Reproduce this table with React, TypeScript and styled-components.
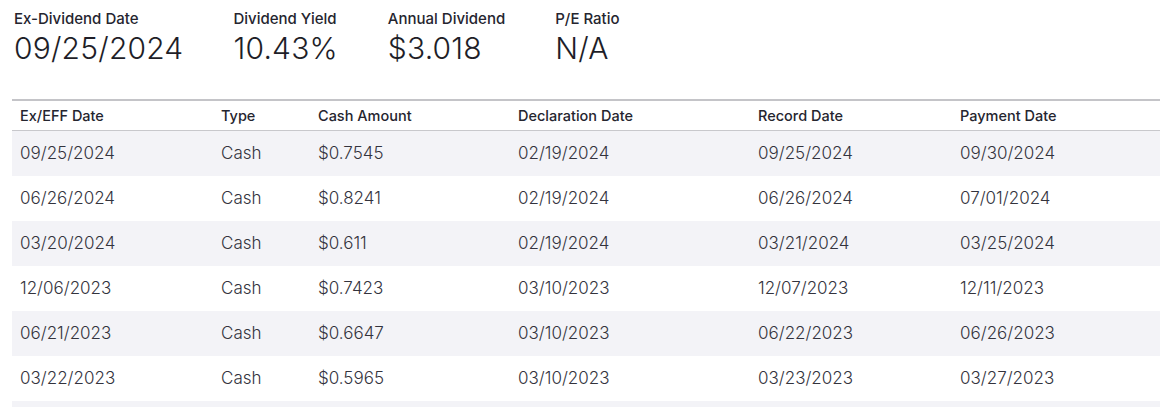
import React from "react";
import styled, { createGlobalStyle } from "styled-components";

const Global = createGlobalStyle`
  html, body { margin: 0; padding: 0; background: #ffffff; }
  body { font-family: Inter, "Noto Sans", sans-serif; color: #1e1e28; }
`;

const Page = styled.div`
  padding: 9px 0 0 12px;
`;

const Stats = styled.div`
  display: flex;
  gap: 50px;
  padding-left: 2px;
  height: 90px;
`;

const Stat = styled.div`
  display: flex;
  flex-direction: column;
`;

const StatLabel = styled.div`
  font-size: 15px;
  font-weight: 500;
  line-height: 19px;
  color: #25252f;
`;

const StatValue = styled.div`
  font-size: 30px;
  font-weight: 300;
  line-height: 40px;
  color: #1e1e28;
  letter-spacing: 0.2px;
`;

const Table = styled.table`
  width: 1148px;
  border-collapse: collapse;
  border-top: 2px solid #c4c4c8;
  table-layout: fixed;
`;

const HeadCell = styled.th<{ $w: number }>`
  box-sizing: border-box;
  width: ${(p) => p.$w}px;
  text-align: left;
  font-size: 14.5px;
  font-weight: 500;
  color: #25252f;
  height: 30px;
  padding: 0 0 0 8px;
  border-bottom: 1px solid #c8c8cc;
`;

const Row = styled.tr<{ $striped: boolean }>`
  background: ${(p) => (p.$striped ? "#f3f3f7" : "#ffffff")};
`;

const Cell = styled.td`
  height: 45px;
  padding: 0 0 0 8px;
  font-size: 17px;
  font-weight: 300;
  color: #33333d;
`;

const stats = [
  { label: "Ex-Dividend Date", value: "09/25/2024" },
  { label: "Dividend Yield", value: "10.43%" },
  { label: "Annual Dividend", value: "$3.018" },
  { label: "P/E Ratio", value: "N/A" },
];

const cols = [
  { title: "Ex/EFF Date", w: 201 },
  { title: "Type", w: 97 },
  { title: "Cash Amount", w: 200 },
  { title: "Declaration Date", w: 240 },
  { title: "Record Date", w: 202 },
  { title: "Payment Date", w: 208 },
];

const rows = [
  ["09/25/2024", "Cash", "$0.7545", "02/19/2024", "09/25/2024", "09/30/2024"],
  ["06/26/2024", "Cash", "$0.8241", "02/19/2024", "06/26/2024", "07/01/2024"],
  ["03/20/2024", "Cash", "$0.611", "02/19/2024", "03/21/2024", "03/25/2024"],
  ["12/06/2023", "Cash", "$0.7423", "03/10/2023", "12/07/2023", "12/11/2023"],
  ["06/21/2023", "Cash", "$0.6647", "03/10/2023", "06/22/2023", "06/26/2023"],
  ["03/22/2023", "Cash", "$0.5965", "03/10/2023", "03/23/2023", "03/27/2023"],
  ["", "", "", "", "", ""],
];

export default function App() {
  return (
    <>
      <Global />
      <Page>
        <Stats>
          {stats.map((s) => (
            <Stat key={s.label}>
              <StatLabel>{s.label}</StatLabel>
              <StatValue>{s.value}</StatValue>
            </Stat>
          ))}
        </Stats>
        <Table>
          <thead>
            <tr>
              {cols.map((c) => (
                <HeadCell key={c.title} $w={c.w}>
                  {c.title}
                </HeadCell>
              ))}
            </tr>
          </thead>
          <tbody>
            {rows.map((r, i) => (
              <Row key={i} $striped={i % 2 === 0}>
                {r.map((v, j) => (
                  <Cell key={j}>{v}</Cell>
                ))}
              </Row>
            ))}
          </tbody>
        </Table>
      </Page>
    </>
  );
}
